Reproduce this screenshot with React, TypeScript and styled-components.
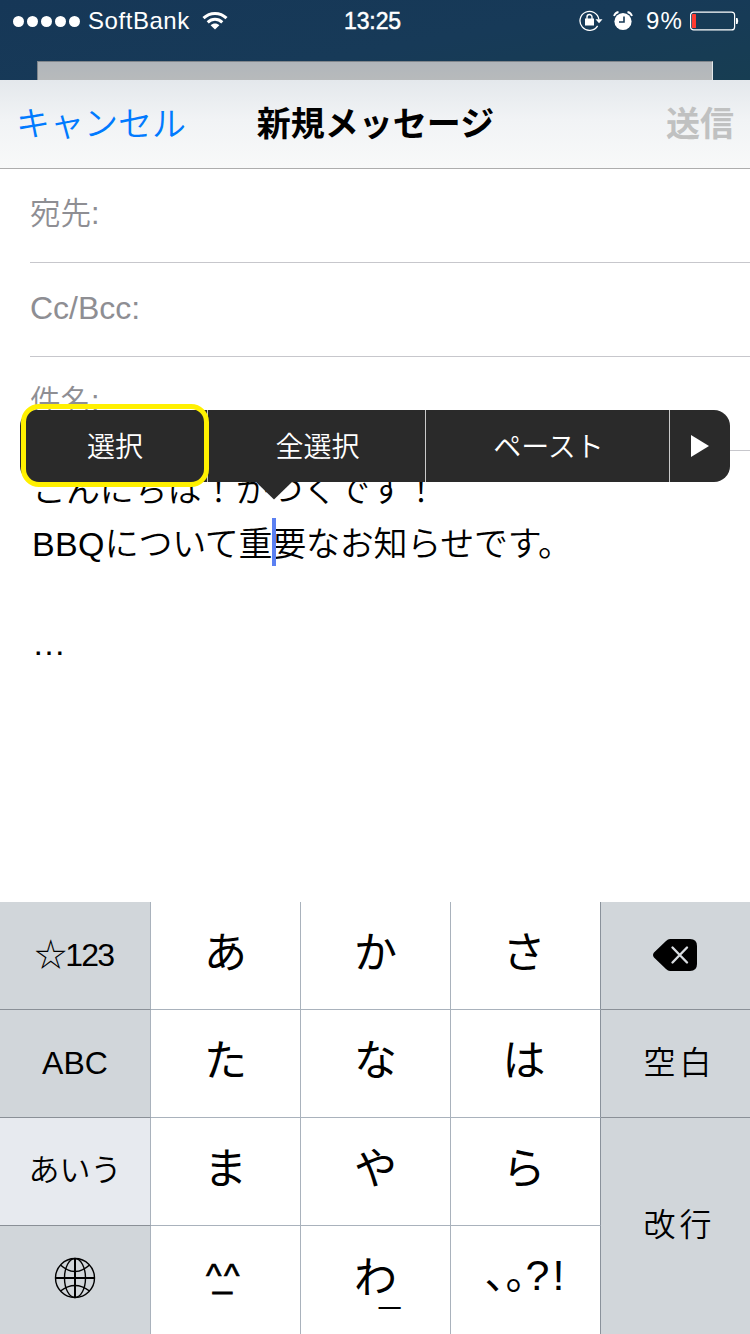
import React from "react";
import styled, { createGlobalStyle } from "styled-components";

const GlobalStyle = createGlobalStyle`
  * { box-sizing: border-box; }
  body {
    margin: 0;
    background: #fff;
    font-family: "Liberation Sans", "Noto Sans CJK JP", sans-serif;
    color: #000;
  }
`;

const Phone = styled.div`
  width: 750px;
  height: 1334px;
  display: flex;
  flex-direction: column;
  overflow: hidden;
  background: #fff;
`;

const Backdrop = styled.header`
  height: 80px;
  display: flex;
  flex-direction: column;
  justify-content: space-between;
  background: linear-gradient(170deg, #163757 0%, #173a58 55%, #173d52 100%);
`;

const StatusBar = styled.div`
  height: 40px;
  display: grid;
  grid-template-columns: 1fr auto 1fr;
  align-items: center;
  padding: 2px 11px 0 13px;
  color: #fff;
`;

const StatusGroup = styled.div<{ $end?: boolean }>`
  display: flex;
  align-items: center;
  justify-content: ${(p) => (p.$end ? "flex-end" : "flex-start")};
`;

const SignalDots = styled.div`
  display: flex;
  gap: 3px;
  margin-right: 8px;
`;

const Dot = styled.i`
  width: 11px;
  height: 11px;
  border-radius: 50%;
  background: #fff;
`;

const Carrier = styled.span`
  font-size: 24px;
  line-height: 28px;
  letter-spacing: 0.55px;
  margin-right: 12px;
`;

const Clock = styled.time`
  font-size: 23px;
  line-height: 28px;
  margin-right: 7px;
  letter-spacing: -0.1px;
  -webkit-text-stroke: 0.5px #fff;
`;

const RotationLock = styled.svg`
  margin-right: 10px;
`;

const BatteryText = styled.span`
  font-size: 24px;
  line-height: 28px;
  letter-spacing: 1.2px;
  margin: 0 7px 0 13px;
`;

const BackCard = styled.div`
  height: 19px;
  margin: 0 37px;
  background: linear-gradient(#b1b6bb, #b7babb);
  border: 1px solid #80868c;
  border-right-color: #e3e8ea;
  border-bottom: 0;
`;

const NavBar = styled.nav`
  height: 89px;
  display: grid;
  grid-template-columns: 1fr auto 1fr;
  align-items: center;
  padding: 0 16px 0 17px;
  border-bottom: 1px solid #adadad;
  background: linear-gradient(#e4e8ec 0%, #f1f3f5 45%, #f8f9f9 100%);
  font-size: 34px;
  line-height: 50px;
`;

const NavAction = styled.span<{ $disabled?: boolean }>`
  color: ${(p) => (p.$disabled ? "#c0c1c1" : "#007aff")};
  font-weight: ${(p) => (p.$disabled ? 600 : 350)};
  justify-self: ${(p) => (p.$disabled ? "end" : "start")};
  margin-left: ${(p) => (p.$disabled ? 0 : -1)}px;
`;

const Title = styled.h1`
  margin: 0;
  font-size: 34px;
  font-weight: 600;
`;

const Compose = styled.main`
  position: relative;
  height: 733px;
`;

const Field = styled.div<{ $latin?: boolean }>`
  height: 94px;
  margin-left: 30px;
  padding-top: ${(p) => (p.$latin ? 22 : 21)}px;
  border-bottom: 1px solid #c7c7cc;
  color: #8e8e93;
  font-size: ${(p) => (p.$latin ? 32 : 30.5)}px;
  font-weight: 350;
  line-height: 46px;
`;

const Body = styled.div`
  padding: 12px 0 0 32px;
  font-size: 34px;
  font-weight: 350;
  line-height: 54px;
`;

const Line = styled.p<{ $spacing?: number; $height?: number }>`
  margin: 0;
  height: ${(p) => p.$height ?? 54}px;
  white-space: nowrap;
  letter-spacing: ${(p) => p.$spacing ?? 0}px;
`;

const Latin = styled.span`
  letter-spacing: 0.3px;
`;

const Caret = styled.i`
  position: absolute;
  left: 272px;
  top: 349px;
  width: 4px;
  height: 48px;
  background: #5b80f2;
`;

const Menu = styled.div`
  position: absolute;
  left: 20px;
  top: 241px;
  width: 710px;
  height: 72px;
  display: grid;
  grid-template-columns: 188px 218px 244px 60px;
  border-radius: 16px;
  background: #2a2a2a;
  color: #fff;
  font-size: 28px;
  font-weight: 350;
`;

const MenuItem = styled.div`
  display: flex;
  align-items: center;
  justify-content: center;
  padding: 0 0 2px 2px;
  &:first-child { padding-left: 3px; }
  &:nth-child(4) { padding: 0; }
  &:not(:last-of-type) { border-right: 1px solid #c9c9c9; }
`;

const MenuPointer = styled.svg`
  position: absolute;
  left: 236px;
  top: 72px;
`;

const Highlight = styled.div`
  position: absolute;
  left: 21px;
  top: 235px;
  width: 188px;
  height: 83px;
  border: 5px solid #fff000;
  border-radius: 18px;
`;

const Keyboard = styled.section`
  display: grid;
  grid-template-columns: 151px repeat(3, 150px) 149px;
  grid-template-rows: repeat(4, 108px);
`;

type KeyKind = "kana" | "side" | "active";

const Key = styled.div<{ $kind: KeyKind; $edge?: boolean; $last?: boolean; $tall?: boolean; $right?: boolean }>`
  display: flex;
  align-items: center;
  justify-content: center;
  grid-row: ${(p) => (p.$tall ? "span 2" : "auto")};
  padding-right: ${(p) => (p.$edge ? 3 : 0)}px;
  padding-bottom: ${(p) => (p.$kind === "kana" ? 4 : 2)}px;
  background: ${(p) => ({ kana: "#fff", side: "#d1d6da", active: "#e7eaef" })[p.$kind]};
  border-style: solid;
  border-width: 0 ${(p) => (p.$right ? 0 : 1)}px ${(p) => (p.$last ? 0 : 1)}px 0;
  border-right-color: ${(p) => (p.$edge ? "#8a929b" : "#a9b2bc")};
  border-bottom-color: ${(p) => (p.$kind === "kana" ? "#a9b2bc" : "#8a9097")};
  font-size: ${(p) => (p.$kind === "kana" ? 43 : 32)}px;
  font-weight: ${(p) => (p.$kind === "kana" ? 400 : 350)};
  line-height: 1;
`;

const KeyLabel = styled.span<{ $spacing?: number; $size?: number; $shift?: number }>`
  letter-spacing: ${(p) => p.$spacing ?? 0}px;
  margin-right: ${(p) => -(p.$spacing ?? 0)}px;
  padding-left: ${(p) => p.$shift ?? 0}px;
  font-size: ${(p) => (p.$size ? `${p.$size}px` : "inherit")};
  white-space: nowrap;
`;

const Stacked = styled.span`
  position: relative;
  display: block;
`;

const Under = styled.span<{ $x: number; $y: number; $size: number; $bold?: boolean }>`
  position: absolute;
  left: ${(p) => p.$x}px;
  top: ${(p) => p.$y}px;
  font-size: ${(p) => p.$size}px;
  font-family: ${(p) => (p.$bold ? "inherit" : '"Noto Sans CJK JP", sans-serif')};
  font-weight: ${(p) => (p.$bold ? 400 : 300)};
  -webkit-text-stroke: ${(p) => (p.$bold ? "0.8px #000" : "0")};
`;

const Face = styled(Stacked)`
  font-size: 33px;
  letter-spacing: 2.5px;
  margin: 0 3px 5px 0;
  -webkit-text-stroke: 0.7px #000;
`;

const Punctuation = styled.span`
  display: grid;
  grid-template-columns: 21px 20px 27px 14px;
  padding-bottom: 9px;
  margin-right: -3px;
  font-size: 41px;
  font-weight: 400;
  font-family: "Noto Sans CJK JP", sans-serif;
`;

const Mark = styled.span`
  font-family: "Liberation Sans", sans-serif;
  font-size: 43px;
  padding-top: 3px;
`;

const WifiIcon = () => (
  <svg width="26" height="20" viewBox="0 0 26 20" fill="none" stroke="#fff" strokeWidth="3">
    <path d="M1.500 7.200C8 .9 18 .9 24.500 7.200" />
    <path d="M5.700 11.300C10 7.300 16 7.300 20.300 11.300" />
    <path d="M13 18.500L8.600 14.200C11.200 12 14.800 12 17.400 14.200Z" fill="#fff" stroke="none" />
  </svg>
);

const RotationLockIcon = () => (
  <RotationLock width="24" height="22" viewBox="0 0 24 22" fill="none" stroke="#fff">
    <path d="M18.600 15.800A9.500 9.500 0 1 1 19.900 9.500" strokeWidth="1.300" />
    <path d="M16.500 9.300H23.500L20 13.300Z" fill="#fff" stroke="none" />
    <rect x="6" y="8.500" width="9" height="7" fill="#fff" stroke="none" />
    <path d="M8 9V7a2.500 2.500 0 0 1 5 0V9" strokeWidth="1.400" />
  </RotationLock>
);

const AlarmIcon = () => (
  <svg width="20" height="20" viewBox="0 0 20 20" fill="none">
    <circle cx="10" cy="10.500" r="8.600" fill="#fff" />
    <path d="M11 5.500V11H6" stroke="#173a55" strokeWidth="1.600" />
    <path d="M1 5A6 6 0 0 1 5.500 1M19 5A6 6 0 0 0 14.500 1" stroke="#fff" strokeWidth="1.800" />
  </svg>
);

const BatteryIcon = () => (
  <svg width="49" height="20" viewBox="0 0 49 20" fill="none">
    <rect x="0.600" y="1.100" width="44" height="17.800" rx="3" stroke="#fff" strokeWidth="1.200" />
    <rect x="2" y="3" width="4" height="14" rx="0.500" fill="#ff3b30" />
    <path d="M46 7h1.500q1.500 3 0 6H46Z" fill="#fff" />
  </svg>
);

const DeleteSvg = styled.svg`
  margin-right: 1px;
`;

const DeleteIcon = () => (
  <DeleteSvg width="44" height="32" viewBox="0 0 44 32">
    <path d="M17 0H37Q44 0 44 7V25Q44 32 37 32H17Q15 32 13 30L1 18.500Q-1 16 1 13.500L13 2Q15 0 17 0Z" />
    <path
      d="M19.500 8.500L34 23.500M34 8.500L19.500 23.500"
      stroke="#d8dce0"
      strokeWidth="2.400"
      strokeLinecap="round"
    />
  </DeleteSvg>
);

const GlobeSvg = styled.svg`
  margin-bottom: 2px;
`;

const GlobeIcon = () => (
  <GlobeSvg width="42" height="42" viewBox="0 0 42 42" fill="none" stroke="#000" strokeWidth="1.400">
    <circle cx="21" cy="21" r="19.500" />
    <ellipse cx="21" cy="21" rx="10.500" ry="19.500" />
    <path d="M6.500 8Q21 21 35.500 8M6.500 34Q21 23 35.500 34" />
    <path d="M21 1V41M1 21H41" strokeWidth="2" />
  </GlobeSvg>
);

export default function App() {
  return (
    <Phone>
      <GlobalStyle />
      <Backdrop>
        <StatusBar>
          <StatusGroup>
            <SignalDots>
              {[0, 1, 2, 3, 4].map((n) => (
                <Dot key={n} />
              ))}
            </SignalDots>
            <Carrier>SoftBank</Carrier>
            <WifiIcon />
          </StatusGroup>
          <Clock>13:25</Clock>
          <StatusGroup $end>
            <RotationLockIcon />
            <AlarmIcon />
            <BatteryText>9%</BatteryText>
            <BatteryIcon />
          </StatusGroup>
        </StatusBar>
        <BackCard />
      </Backdrop>
      <NavBar>
        <NavAction>キャンセル</NavAction>
        <Title>新規メッセージ</Title>
        <NavAction $disabled>送信</NavAction>
      </NavBar>
      <Compose>
        <Field>宛先:</Field>
        <Field $latin>Cc/Bcc:</Field>
        <Field>件名:</Field>
        <Body>
          <Line $spacing={-0.1}>こんにちは！かつくです！</Line>
          <Line $spacing={-0.28}>
            <Latin>BBQ</Latin>について重要なお知らせです。
          </Line>
          <Line $height={45} />
          <Line>…</Line>
        </Body>
        <Caret />
        <Menu>
          <MenuItem>選択</MenuItem>
          <MenuItem>全選択</MenuItem>
          <MenuItem>ペースト</MenuItem>
          <MenuItem>
            <svg width="18" height="22" viewBox="0 0 18 22">
              <path d="M0 0L18 11L0 22Z" fill="#fff" />
            </svg>
          </MenuItem>
          <MenuPointer width="36" height="18" viewBox="0 0 36 18">
            <path d="M0 0H36L18 17.500Z" fill="#2a2a2a" />
          </MenuPointer>
        </Menu>
        <Highlight />
      </Compose>
      <Keyboard>
        <Key $kind="side">
          <KeyLabel $spacing={-1.7}>☆123</KeyLabel>
        </Key>
        <Key $kind="kana">あ</Key>
        <Key $kind="kana">か</Key>
        <Key $kind="kana" $edge>さ</Key>
        <Key $kind="side" $right>
          <DeleteIcon />
        </Key>
        <Key $kind="side">ABC</Key>
        <Key $kind="kana">た</Key>
        <Key $kind="kana">な</Key>
        <Key $kind="kana" $edge>は</Key>
        <Key $kind="side" $right>
          <KeyLabel $spacing={4} $shift={4}>空白</KeyLabel>
        </Key>
        <Key $kind="active">
          <KeyLabel $size={31}>あいう</KeyLabel>
        </Key>
        <Key $kind="kana">ま</Key>
        <Key $kind="kana">や</Key>
        <Key $kind="kana" $edge>ら</Key>
        <Key $kind="side" $right $last $tall>
          <KeyLabel $spacing={4} $shift={4}>改行</KeyLabel>
        </Key>
        <Key $kind="side" $last>
          <GlobeIcon />
        </Key>
        <Key $kind="kana" $last>
          <Face>
            ^^
            <Under $x={7} $y={-1} $size={34} $bold>_</Under>
          </Face>
        </Key>
        <Key $kind="kana" $last>
          <Stacked>
            わ
            <Under $x={24} $y={7} $size={42}>_</Under>
          </Stacked>
        </Key>
        <Key $kind="kana" $edge $last>
          <Punctuation>
            <span>、</span>
            <span>。</span>
            <Mark>?</Mark>
            <Mark>!</Mark>
          </Punctuation>
        </Key>
      </Keyboard>
    </Phone>
  );
}
